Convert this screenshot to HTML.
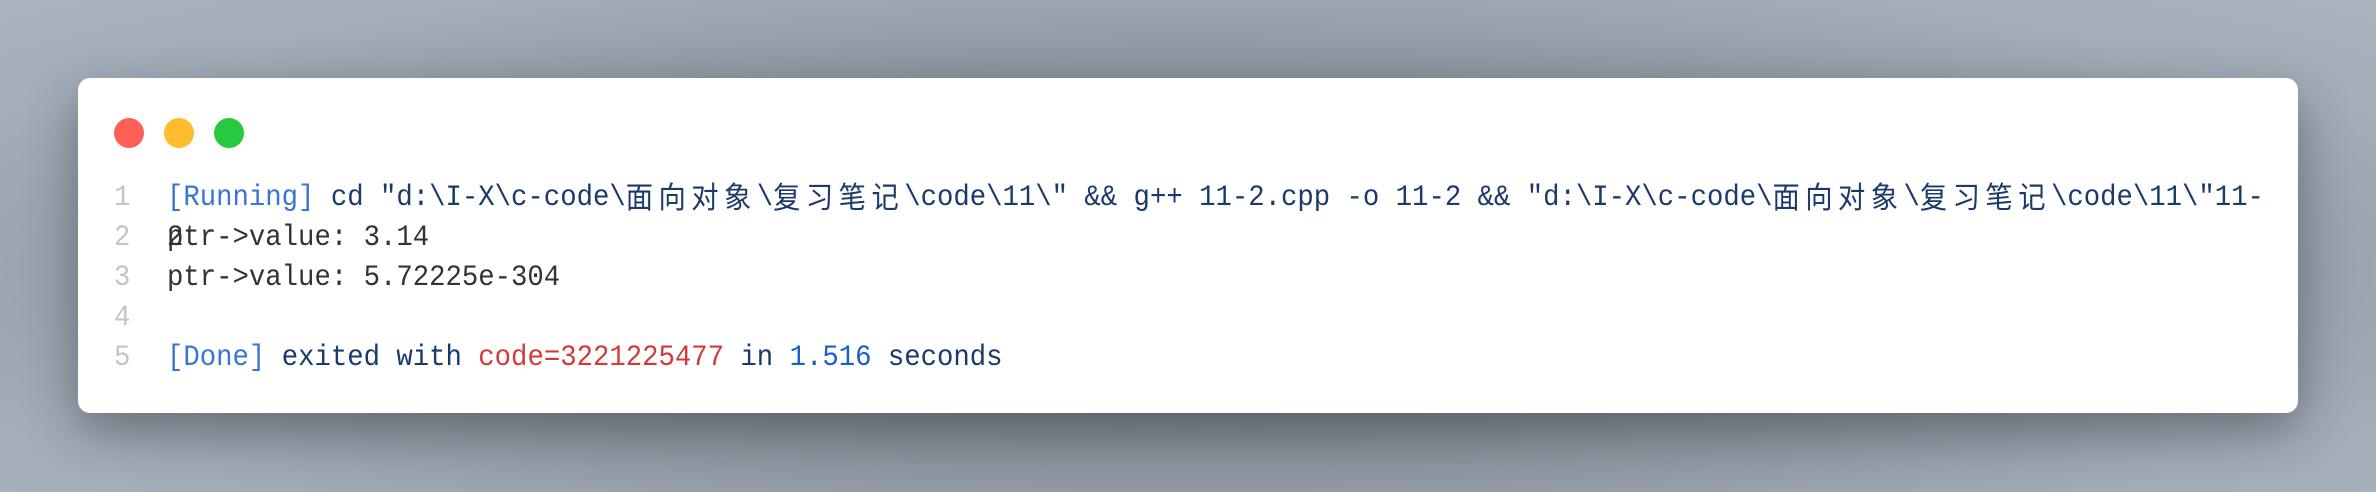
<!DOCTYPE html>
<html><head><meta charset="utf-8"><style>
html,body{margin:0;padding:0;width:2376px;height:492px;overflow:hidden}
body{background:radial-gradient(ellipse at 50% 55%,#6f767e 0%,#838b94 40%,#a3adb8 80%,#aab4bf 100%);position:relative;font-family:"Liberation Mono","Noto Sans CJK SC",monospace}
.card{position:absolute;left:78px;top:78px;width:2220px;height:335px;background:#fff;border-radius:12px;box-shadow:0 18px 50px rgba(40,45,52,.45)}
.dot{position:absolute;top:40px;width:30px;height:30px;border-radius:50%}
.l{position:absolute;left:0;height:40px;line-height:40px;font-size:30px;white-space:pre;color:#1b3a6b}
.n{position:absolute;left:36px;color:#c4c4c4;transform:scaleX(.908);transform-origin:left}
.t{position:absolute;left:89px;transform:scaleX(.91);transform-origin:left}
.b{color:#3a74d6}.r{color:#d23a3a}.nb{color:#1a5fc8}.g{color:#333}
.c{font-family:"Noto Sans CJK SC",sans-serif;font-size:30px;letter-spacing:6px;display:inline-block;width:144px;overflow:hidden;vertical-align:top;position:relative;top:-3px}
</style></head><body>
<div class="card">
<div class="dot" style="left:36px;background:#fe5f57"></div>
<div class="dot" style="left:86px;background:#febc2e"></div>
<div class="dot" style="left:136px;background:#28c840"></div>
<div class="l" style="top:100px"><span class="n">1</span><span class="t"><span class="b">[Running]</span> cd "d:\I-X\c-code\<span class="c">面向对象</span>\<span class="c">复习笔记</span>\code\11\" &amp;&amp; g++ 11-2.cpp -o 11-2 &amp;&amp; "d:\I-X\c-code\<span class="c">面向对象</span>\<span class="c">复习笔记</span>\code\11\"11-</span></div>
<div class="l" style="top:140px"><span class="n">2</span><span class="t g">ptr-&gt;value: 3.14</span><span class="t g">2</span></div>
<div class="l" style="top:180px"><span class="n">3</span><span class="t g">ptr-&gt;value: 5.72225e-304</span></div>
<div class="l" style="top:220px"><span class="n">4</span></div>
<div class="l" style="top:260px"><span class="n">5</span><span class="t"><span class="b">[Done]</span> exited with <span class="r">code=3221225477</span> in <span class="nb">1.516</span> seconds</span></div>
</div>
</body></html>
